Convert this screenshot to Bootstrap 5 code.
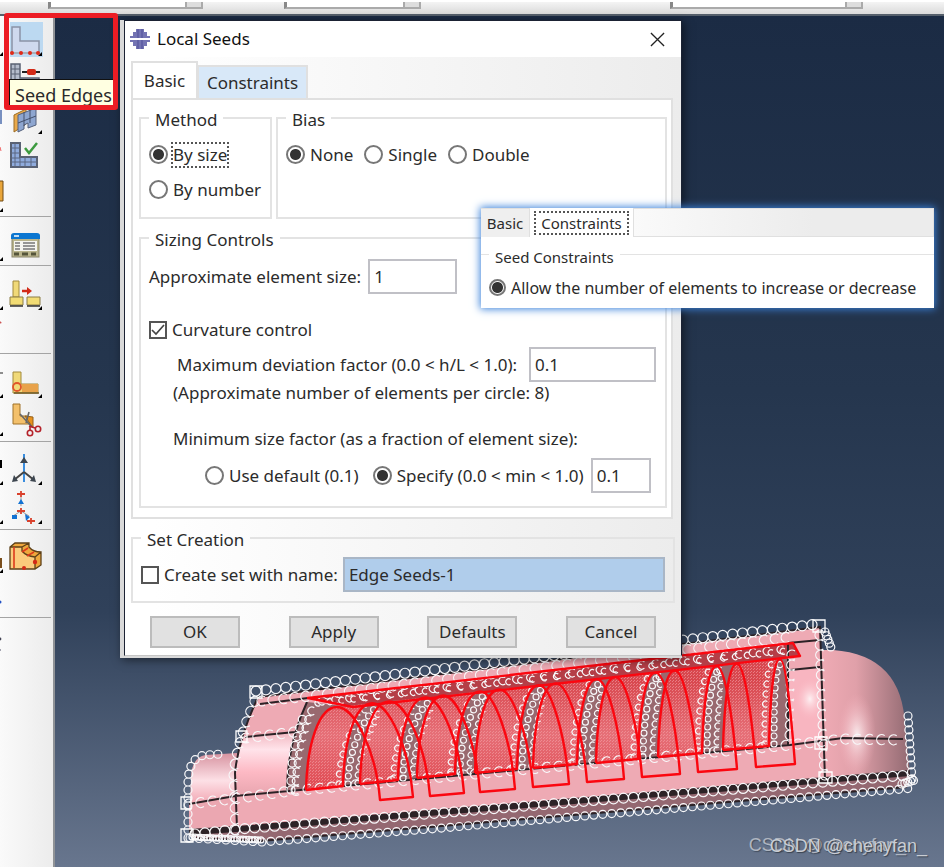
<!DOCTYPE html>
<html lang="en">
<head>
<meta charset="utf-8">
<meta name="viewport" content="width=device-width, initial-scale=1">
<title>Local Seeds</title>
<link href="https://cdn.jsdelivr.net/npm/bootstrap@5.3.0/dist/css/bootstrap.min.css" rel="stylesheet">
<style>
body{font-family:"Noto Sans","Open Sans",sans-serif;font-size:17px;line-height:22px;color:#2b2b2b;background:#1b2b44}
.topstrip{height:16px;border-top:2px solid #fff;border-bottom:2px solid #555f6b;background:linear-gradient(#f4f4f4,#dadada)}
.combo{height:7px;background:#fff;border:2px solid #aaa;border-top:0;border-left:3px solid #888;box-sizing:border-box}
.combo span{width:16px;background:#ddd;border-left:2px solid #aaa}
.combo-a{width:155px}
.combo-b{width:137px;margin-left:81px}
.combo-c{width:193px;margin-left:249px}
.tools{width:55px;background:linear-gradient(90deg,#fafafa,#ececec);border-right:2px solid #8f9296}
.tgroup{padding:5px 0 4px;border-bottom:1px solid #a4a4a4;margin-right:2px}
.tgroup:first-child{padding:3px 0 2px}
.tgroup:last-child{border:0}
.tool{display:block;width:100%;height:39px;padding:0;border:0;background:none;border-radius:0}
.tool svg{display:block;width:52px;height:39px}
.scene{background:linear-gradient(#1b2b44,#25364e 44%,#30415a 70%,#68768e);min-width:0}
.model{left:-55px;top:-16px;width:944px;height:867px}
.redbox{left:4px;top:-3px;width:114px;height:97px;border:5px solid #ec1c24;border-radius:3px;z-index:5}
.tip{left:9px;top:63px;width:108px;height:31px;padding:4px 5px;font-size:18px;background:#ffffe1;border:1px solid #111;z-index:4;white-space:nowrap}
.win{left:65px;top:4px;width:562px;background:#d9d9d9;padding:0 0 2px 4px;box-shadow:2px 2px 9px rgba(0,0,0,.5)}
.frame{border:1px solid #1b2233;border-bottom-color:#c5c5c5;background:#fff}
.titlebar{height:36px;padding:0 14px 0 5px;color:#111}
.titlebar .name{gap:7px}
.xbtn{border:0;background:none;padding:2px;line-height:0}
.wbody{background:linear-gradient(90deg,#fff 5%,#ececec);padding:5px 6px 7px 6px}
.tabrow{height:36px}
.tb{border:2px solid #e0e0e0;border-bottom:0;color:#2b2b2b;background:#efefef;padding:0;font-size:17px;line-height:22px}
.tb-basic{width:67px;height:37px;background:#fff;z-index:1}
.tb-cons{width:111px;height:33px;background:#d8e8f8;margin-left:-1px}
.pane{background:#fff;border:2px solid #e0e0e0;padding:4px 4px 5px 6px;margin-right:2px;height:421px}
.box{border:2px solid #e3e3e3;min-width:0;margin:0;padding:0 8px}
.box legend{float:none;width:auto;margin:0 0 6px;padding:5px 6px 0;font-size:17px;line-height:22px}
.method{width:133px;height:115px}
.bias{height:115px}
.bias .choices{gap:11px}
.sizing{height:284px;margin-top:5px}
.sizing legend{margin-bottom:8px}
.sizing .curv{margin-top:18px}
.sizing .fld{margin-left:2px}
.setbox{height:79px;margin-top:5px}
.optrow{gap:5px;height:35px}
.optrow label{white-space:nowrap}
.rd{appearance:none;width:19px;height:19px;margin:0;flex:none;border:2px solid #777;border-radius:50%;background:#fff}
.rd:checked{background:radial-gradient(circle,#333 5px,#fff 6px)}
.ck{appearance:none;width:18px;height:18px;margin:0;flex:none;border:2px solid #555;background:#fff}
.ck:checked{background:#fff url("data:image/svg+xml,%3Csvg xmlns='http://www.w3.org/2000/svg' viewBox='0 0 14 14'%3E%3Cpath d='M1 7l4 4 8-9' fill='none' stroke='%23444' stroke-width='1.7'/%3E%3C/svg%3E")}
.dots{outline:2px dotted #555}
.fld{height:35px;border:2px solid #c0c0c6;background:#fff;padding:0 4px;color:#2b2b2b;border-radius:0;min-width:0}
.w-a{width:89px}.w-b{width:127px}.w-c{width:60px}
.fld.sel{background:#b0cdeb;border-color:#a9b6c6}
.ind{padding-left:28px;gap:10px}
.factor{gap:14px}
.btnrow{padding:13px 19px 0}
.dlgbtn{width:90px;height:32px;border:2px solid #bcbcbc;background:#e1e1e1;padding:0;border-radius:0;font-size:17px;line-height:22px;color:#2b2b2b}
.inset{left:426px;top:192px;width:453px;background:#fff;box-shadow:0 0 8px 1px #3b82da;font-size:16px;z-index:3}
.insettabs{height:29px}
.insettabs .tb{font-size:15px;border-width:1px}
.insettabs .itb-a{width:49px;border-left:0}
.insettabs .itb-b{width:103px;background:#fff;border:0}
.itb-b span{outline:2px dotted #555;padding:0 5px}
.fill{background:linear-gradient(90deg,#fafafa,#ececec 60%);border:1px solid #e0e0e0}
.inset .box{border-width:1px 0 0;padding:0 8px 3px;margin-top:4px}
.inset .box legend{font-size:15px;margin-bottom:2px;padding-top:5px}
.inset .rd{width:17px;height:17px}
.wm{font:18px/24px "Liberation Sans",Arial,sans-serif;color:#c9cdd4;text-shadow:1px 1px 1px #39424f;white-space:nowrap}
.wm-a{right:38px;bottom:10px;opacity:.75}
.wm-b{right:17px;bottom:9px}
</style>
<script src="https://cdn.jsdelivr.net/npm/bootstrap@5.3.0/dist/js/bootstrap.bundle.min.js"></script>
</head>
<body>
<div class="vh-100 d-flex flex-column overflow-hidden">
<header class="topstrip d-flex">
  <div class="d-flex ms-5">
    <div class="combo combo-a d-flex justify-content-end"><span></span></div>
    <div class="combo combo-b d-flex justify-content-end"><span></span></div>
    <div class="combo combo-c d-flex justify-content-end"><span></span></div>
  </div>
</header>
<main class="d-flex flex-grow-1 position-relative">
  <nav class="tools flex-shrink-0" aria-label="Mesh tools">
    <div class="tgroup">
      <button class="tool" aria-label="Seed Edges"><svg viewBox="0 0 52 39"><rect x="10" y="3" width="33" height="35" fill="#bcd9f1"/><path d="M12 8h8v14h19v12H12z" fill="#cfd9ee" stroke="#8b93a6" stroke-width="1.5"/><path d="M12 34h27" stroke="#bbb"/><g fill="#e02a18"><circle cx="12" cy="34" r="2"/><circle cx="21" cy="34" r="2"/><circle cx="30" cy="34" r="2"/><circle cx="38" cy="34" r="2"/></g><path d="M42 33v4h-4zM3 33v4h-4z"/></svg></button>
      <button class="tool" aria-label="Seed part"><svg viewBox="0 0 52 39"><path d="M11 6h9v14h19v12H11z" fill="#b4bccc" stroke="#596173" stroke-width="1.5"/><path d="M15 6v20M11 11h9M11 16h9" stroke="#596173"/><path d="M22 14h18" stroke="#222" stroke-width="2"/><rect x="27" y="11" width="9" height="6" rx="2" fill="#d22a17"/></svg></button>
      <button class="tool" aria-label="Mesh controls"><svg viewBox="0 0 52 39"><path d="M14 18l12-6v15l-12 8z" fill="#e9a94a" stroke="#9c6b22"/><path d="M18 18l18-7v17l-8 3v-5l-4 2v4l-6 3z" fill="#8ea6d0" stroke="#55617c"/><path d="M24 15v14M30 13v13M18 26l18-7" stroke="#44506b" fill="none"/><path d="M42 33v4h-4z"/><path d="M0 13h2v14h-2z" fill="#7890c0"/></svg></button>
      <button class="tool" aria-label="Verify mesh"><svg viewBox="0 0 52 39"><path d="M11 7h9v14h17v10H11z" fill="#8fabdd" stroke="#596173" stroke-width="2"/><path d="M15 7v24M11 12h9M11 17h9M11 22h9M20 21v10M25 21v10M31 21v10M11 26h26" stroke="#5b6781"/><path d="M25 12l4 5 8-10" fill="none" stroke="#3c9a3f" stroke-width="2.5"/><path d="M0 11l1 4" stroke="#e66"/></svg></button>
      <button class="tool" aria-label="Edit mesh"><svg viewBox="0 0 52 39"><path d="M-2 6h5v20h-5z" fill="#e9a63b" stroke="#704b14"/><path d="M3 33v4h-4z"/></svg></button>
    </div>
    <div class="tgroup">
      <button class="tool" aria-label="Mesh table"><svg viewBox="0 0 52 39"><rect x="12" y="13" width="27" height="22" fill="#b9b48c" stroke="#8a866b"/><path d="M11 17v-3q0-3 3-3h23q3 0 3 3v3z" fill="#0b76d1"/><path d="M14 14h5" stroke="#fff" stroke-width="1.5"/><rect x="14" y="19" width="23" height="10" fill="#f5f5f0"/><path d="M15 21h5M15 24h5M15 27h5M23 21h12M23 24h12M23 27h12" stroke="#777" stroke-width="1.3"/><path d="M14 32h5M22 32h6M31 32h5" stroke="#55553a" stroke-width="3"/><path d="M3 35v4h-4z"/></svg></button>
    </div>
    <div class="tgroup">
      <button class="tool" aria-label="Move part"><svg viewBox="0 0 52 39"><path d="M13 10h6v16h-6z" fill="#f0d978" stroke="#a28a3c"/><path d="M10 26h13v8H10zM27 26h13v8H27z" fill="#f2dc74" stroke="#8a7c46"/><path d="M10 35h13M27 35h13" stroke="#333" stroke-width="1.5"/><path d="M22 20h6" stroke="#d22a17" stroke-width="2.5"/><path d="M27 16l5 4-5 4z" fill="#d22a17"/><path d="M42 35v4h-4zM3 35v4h-4z"/></svg></button>
      <button class="tool" aria-label="More"><svg viewBox="0 0 52 39"><path d="M0 13l1-1" stroke="#c55" stroke-width="2"/></svg></button>
    </div>
    <div class="tgroup">
      <button class="tool" aria-label="Join part"><svg viewBox="0 0 52 39"><path d="M13 13h8v12h17v9H13z" fill="#f0d978" stroke="#a28a3c"/><path d="M22 25h16v8H22z" fill="#e8a24a"/><path d="M14 34h25" stroke="#6b5522" stroke-width="1.5"/><circle cx="17" cy="28" r="4" fill="none" stroke="#e0552a" stroke-width="1.8"/><path d="M42 35v4h-4zM3 35v4h-4z"/><path d="M0 14h3" stroke="#222"/></svg></button>
      <button class="tool" aria-label="Cut part"><svg viewBox="0 0 52 39"><path d="M13 6h7v12h7l4 8H13z" fill="#f3c06b" stroke="#a0722a"/><path d="M25 18l8 1v11z" fill="#e8921e" stroke="#94601a"/><path d="M20 16l12 13M29 14l-3 11" stroke="#666" stroke-width="1.6"/><g fill="none" stroke="#b5232b" stroke-width="1.6"><circle cx="30" cy="35" r="2.7"/><circle cx="38" cy="31" r="2.7"/><path d="M30 32v-4M35 30l-6-2"/></g><path d="M3 34v4h-4z"/></svg></button>
    </div>
    <div class="tgroup">
      <button class="tool" aria-label="Axis"><svg viewBox="0 0 52 39"><path d="M24 7v28" stroke="#3a8dde" stroke-width="2"/><path d="M24 25l-10 8M24 25l10 8" stroke="#444" stroke-width="2"/><path d="M24 10l4 6h-8zM12 35l2-7 4 6zM36 35l-2-7-4 6z" fill="#3d4650"/><path d="M42 34v4h-4zM3 34v4h-4zM0 13h2v8h-2z"/></svg></button>
      <button class="tool" aria-label="Point axis"><svg viewBox="0 0 52 39"><path d="M21 11v9M21 25l-8 5M21 25l8 5" stroke="#999"/><path d="M17 8h8M21 5v6M17 25h8M21 22v6M27 35h8M31 32v6" stroke="#d9412c" stroke-width="1.8"/><path d="M21 13l3 5h-6zM12 29h5v4h-5zM25 28l5 3-4 4z" fill="#1272d3"/><path d="M42 34v4h-4zM3 34v4h-4z"/></svg></button>
    </div>
    <div class="tgroup">
      <button class="tool" aria-label="Edit feature"><svg viewBox="0 0 52 39"><path d="M10 12l5-4h14v4q4 5 12 5v13l-6 4H10z" fill="#eea73c"/><path d="M10 12h12v4q4 5 13 6v12H10z" fill="#fbcb7c"/><path d="M10 12l5-4h14v4q4 5 12 5v13l-6 4H10zM10 12h12v4q4 5 13 6v12M22 12l7-4M35 22l6-5" fill="none" stroke="#5d4018" stroke-width="1.3"/><path d="M14 12v21M22 17l6-4M27 21l7-4" stroke="#dc3a1c" stroke-width="1.6"/><circle cx="24" cy="33" r="2" fill="#d22a17"/><circle cx="35" cy="27" r="2.2" fill="#d22a17"/><path d="M0 23h2v10h-2z" fill="#7a4e1c"/><path d="M3 34v4h-4z"/></svg></button>
      <button class="tool" aria-label="Datum"><svg viewBox="0 0 52 39"><circle cx="0" cy="28" r="1.5" fill="#2452c4"/></svg></button>
    </div>
    <div class="tgroup">
      <button class="tool" aria-label="Query"><svg viewBox="0 0 52 39"><circle cx="0" cy="16" r="1.4" fill="#445"/><circle cx="0" cy="27" r="1" fill="#889"/></svg></button>
    </div>
  </nav>

  <section class="scene flex-grow-1 position-relative">
    <svg class="model position-absolute" viewBox="0 0 944 867" role="img" aria-label="Seeded part">
      <defs>
        <linearGradient id="gBody" x1="0" y1="700" x2="0" y2="790" gradientUnits="userSpaceOnUse"><stop offset="0" stop-color="#eba7b1"/><stop offset=".3" stop-color="#eeaab4"/><stop offset=".55" stop-color="#ffe3ea"/><stop offset=".8" stop-color="#fdb9c4"/><stop offset="1" stop-color="#edaab4"/></linearGradient>
        <linearGradient id="gCap" x1="0" y1="0" x2="0" y2="1"><stop offset="0" stop-color="#d793a0"/><stop offset=".35" stop-color="#fde0e6"/><stop offset=".6" stop-color="#f3afba"/></linearGradient>
        <linearGradient id="gDome" x1="0" y1="0" x2="1" y2="0"><stop offset="0" stop-color="#f0abb5"/><stop offset=".4" stop-color="#e0a0a9"/><stop offset="1" stop-color="#926a72"/></linearGradient>
        <radialGradient id="gShine"><stop offset="0" stop-color="#fff" stop-opacity=".8"/><stop offset="1" stop-color="#fcb4c0" stop-opacity="0"/></radialGradient>
        <linearGradient id="gRib" x1="0" y1="680" x2="0" y2="790" gradientUnits="userSpaceOnUse"><stop offset="0" stop-color="#d8484f"/><stop offset=".5" stop-color="#e67078"/><stop offset="1" stop-color="#df4a52"/></linearGradient>
        <pattern id="pDots" width="3" height="3" patternUnits="userSpaceOnUse"><path d="M0 0h1v1h-1zM1 2h1v1h-1z" fill="#f3a0a5" opacity=".6"/></pattern>
      </defs>
      <path d="M189 832L191 780Q191 757 206 755L236 754L237 830L910 773L907 787L430 827L260 841L192 838Z" fill="#946871"/>
      <path d="M189 832L191 780Q191 757 206 755L237 753V829Z" fill="url(#gCap)"/>
      <path d="M189 804L237 796V829L189 832Z" fill="#eba7b1"/>
      <path d="M820 650L833 650Q903 655 905 727L910 773L824 780Z" fill="url(#gDome)"/>
      <ellipse cx="857" cy="735" rx="19" ry="42" fill="url(#gShine)"/>
      <path d="M258 697L820 627L825 780L237 829L235 773Q238 740 258 697Z" fill="#eeaab4"/>
      <path d="M245 737L295 732Q287 760 287 791L235 796Q232 765 245 737Z" fill="url(#gBody)"/>
      <path d="M790 670L820 667L822 742L790 745Z" fill="#f8b5c0"/>
      <ellipse cx="810" cy="699" rx="16" ry="22" fill="url(#gShine)"/>
      <path d="M307 702L353 707L788 658L789 745L287 791Q287 745 307 702Z" fill="#99696f"/>
      <path d="M308 698L793 643L800 656L353 707Z" fill="#b53e47"/>
      <g fill="none" stroke="#2c2226" stroke-width="2">
        <path d="M258 697L820 627L825 780M260 704L308 698M245 737L295 732M235 796L790 745L843 738L903 739M189 804L235 796M258 697Q238 740 235 773L237 829M307 702Q287 745 287 791M788 643L788 745M788 643L820 640M790 670L820 667"/>
        <path d="M189 832L237 829L910 773" stroke-width="6"/>
        <path d="M192 838L260 841L430 827L907 787"/>
      </g>
      <g id="ribs"></g>
      <g id="seeds" fill="none" stroke="#f8f8fa" stroke-width="1.2"></g>
      <g id="wires" fill="none" stroke="#fb0710" stroke-width="2.4" stroke-linejoin="round"><path d="M308 698L793 643L800 656L353 707Z"/></g>
      <g fill="none" stroke="#fff" stroke-width="1.3"><path d="M250 686h12v12h-12zM813 620h12v12h-12zM181 797h10v12h-10zM181 829h12v13h-12zM236 731h11v11h-11zM815 737h12v12h-12zM819 772h13v11h-13z"/></g>
    </svg>

    <div class="win position-absolute">
      <div class="frame">
        <div class="titlebar d-flex align-items-center justify-content-between">
          <div class="name d-flex align-items-center">
            <svg width="20" height="20" viewBox="0 0 20 20"><path d="M6 0h8v3h3v4h3v6h-3v4h-3v3H6v-3H3v-4H0V7h3V3h3z" fill="#7474b3"/><path d="M7 0h2v20H7zM11 0h2v20h-2z" fill="#6161a6"/><path d="M0 10h20" stroke="#fff" stroke-width="2"/></svg>
            <span>Local Seeds</span>
          </div>
          <button class="xbtn" aria-label="Close"><svg width="15" height="15" viewBox="0 0 16 16"><path d="M1 1l14 14M15 1L1 15" stroke="#222" stroke-width="1.4"/></svg></button>
        </div>
        <div class="wbody">
          <div class="tabrow d-flex align-items-end" role="tablist">
            <button class="tb tb-basic" role="tab" aria-selected="true">Basic</button>
            <button class="tb tb-cons" role="tab" aria-selected="false">Constraints</button>
          </div>
          <div class="pane">
            <div class="d-flex gap-1">
              <fieldset class="box method"><legend>Method</legend>
                <div class="optrow d-flex align-items-center"><input class="rd" type="radio" name="method" id="bysize" checked><label class="dots" for="bysize">By size</label></div>
                <div class="optrow d-flex align-items-center"><input class="rd" type="radio" name="method" id="bynum"><label for="bynum">By number</label></div>
              </fieldset>
              <fieldset class="box bias flex-grow-1"><legend>Bias</legend>
                <div class="choices d-flex">
                  <div class="optrow d-flex align-items-center"><input class="rd" type="radio" name="bias" id="bn" checked><label for="bn">None</label></div>
                  <div class="optrow d-flex align-items-center"><input class="rd" type="radio" name="bias" id="bs"><label for="bs">Single</label></div>
                  <div class="optrow d-flex align-items-center"><input class="rd" type="radio" name="bias" id="bd"><label for="bd">Double</label></div>
                </div>
              </fieldset>
            </div>
            <fieldset class="box sizing"><legend>Sizing Controls</legend>
              <div class="optrow d-flex align-items-center"><label for="aes">Approximate element size:</label><input class="fld w-a" id="aes" type="text" value="1"></div>
              <div class="optrow curv d-flex align-items-center"><input class="ck" type="checkbox" id="curv" checked><label for="curv">Curvature control</label></div>
              <div class="optrow d-flex align-items-center ind"><label for="mdf">Maximum deviation factor (0.0 &lt; h/L &lt; 1.0):</label><input class="fld w-b" id="mdf" type="text" value="0.1"></div>
              <div class="ps-4">(Approximate number of elements per circle: 8)</div>
              <div class="ps-4 mt-4 pb-2">Minimum size factor (as a fraction of element size):</div>
              <div class="factor d-flex ps-5">
                <div class="optrow d-flex align-items-center ps-2"><input class="rd" type="radio" name="msf" id="ud"><label for="ud">Use default (0.1)</label></div>
                <div class="optrow d-flex align-items-center"><input class="rd" type="radio" name="msf" id="sp" checked><label for="sp">Specify (0.0 &lt; min &lt; 1.0)</label><input class="fld w-c" type="text" value="0.1" aria-label="Minimum size factor"></div>
              </div>
            </fieldset>
          </div>
          <fieldset class="box setbox"><legend>Set Creation</legend>
            <div class="optrow d-flex align-items-center"><input class="ck" type="checkbox" id="cs"><label for="cs">Create set with name:</label><input class="fld sel flex-grow-1" type="text" value="Edge Seeds-1" aria-label="Set name"></div>
          </fieldset>
          <div class="btnrow d-flex justify-content-between">
            <button class="dlgbtn">OK</button><button class="dlgbtn">Apply</button><button class="dlgbtn">Defaults</button><button class="dlgbtn">Cancel</button>
          </div>
        </div>
      </div>
    </div>

    <div class="inset position-absolute">
      <div class="insettabs d-flex">
        <button class="tb itb-a">Basic</button><button class="tb itb-b"><span>Constraints</span></button><div class="fill flex-grow-1"></div>
      </div>
      <fieldset class="box"><legend>Seed Constraints</legend>
        <div class="optrow d-flex align-items-center"><input class="rd" type="radio" id="allow" checked><label for="allow">Allow the number of elements to increase or decrease</label></div>
      </fieldset>
    </div>
    <div class="wm wm-a position-absolute">CSDN @chenyfan_</div>
    <div class="wm wm-b position-absolute">CSDN @chenyfan_</div>
  </section>
  <div class="tip position-absolute">Seed Edges</div>
  <div class="redbox position-absolute"></div>
</main>
</div>
<script>
(() => {
const NS = 'http://www.w3.org/2000/svg';
function add(id, d, attrs) {
  const p = document.createElementNS(NS, 'path');
  p.setAttribute('d', d);
  for (const k in attrs || {}) p.setAttribute(k, attrs[k]);
  document.getElementById(id).appendChild(p);
}
// Each rib: back left x, back right x, back y, front left x, front right x, front y
const list = [[306,343,790,380,413,800],[360,398,784,430,464,796],[417,455,778,480,515,792],[475,517,773,533,569,787],[533,577,768,587,624,782],[596,638,763,642,680,777],[658,702,757,698,737,772],[723,769,750,756,795,767]];
const crest = x => 707 - (x - 337) * 0.108;
function half(x0, y0, px) { const t = crest(px), w = (px - x0) * .6; return `M${x0} ${y0}C${x0 + 1} ${y0 - 45} ${px - w} ${t} ${px} ${t}`; }
for (const [a, b, y, c, d, fy] of list) {
  const pa = a + (c - a) * 0.42, pb = b + (d - b) * 0.42, ta = crest(pa), tb = crest(pb);
  const wb = (pb - b) * .6;
  const shape = `${half(a, y, pa)}L${pb} ${tb}C${pb - wb} ${tb} ${b + 1} ${y - 49} ${b} ${y - 4}Z`;
  add('ribs', shape, {fill: 'url(#gRib)'});
  add('ribs', shape, {fill: 'url(#pDots)'});
  add('wires', `${half(a, y, pa)}C${pa + (c - pa) * .4} ${ta} ${c - 4} ${fy - 50} ${c} ${fy}L${d} ${fy - 3}C${d - 4} ${fy - 53} ${pb + (d - pb) * .4} ${tb} ${pb} ${tb}M${a} ${y}L${b} ${y - 4}C${b + 1} ${y - 49} ${pb - wb} ${tb} ${pb} ${tb}`);
}
// A row of seed rings following a curve; open rings leave a gap on one side
function chain(d, step, r, open) {
  const path = document.createElementNS(NS, 'path');
  path.setAttribute('d', d);
  const n = Math.floor(path.getTotalLength() / step);
  let out = '';
  for (let i = 0; i <= n; i++) {
    const p = path.getPointAtLength(i * step);
    out += open ? `M${p.x + r * .6} ${p.y - r * .8}A${r} ${r} 0 1 0 ${p.x + r * .6} ${p.y + r * .8}`
                : `M${p.x - r} ${p.y}a${r} ${r} 0 1 0 ${2 * r} 0a${r} ${r} 0 1 0 ${-2 * r} 0`;
  }
  add('seeds', out);
}
chain('M256 691L818 624', 10, 5);
chain('M262 701L310 696L790 637', 11, 5, true);
chain('M318 703L795 650', 12, 3, true);
chain('M322 701L795 648', 14, 4, true);
chain('M189 804L240 798L290 791L790 745L843 739L905 740', 12, 5, true);
chain('M195 834L240 829L910 775', 10, 5);
chain('M190 838L262 842L430 829L914 788', 9, 4);
chain('M192 837L262 840', 3, 3);
chain('M188 838V782Q189 756 206 755L222 754', 8, 4);
chain('M236 830L234 773Q238 740 256 699', 11, 5, true);
chain('M246 738L295 732', 12, 5, true);
chain('M291 790Q290 750 305 712', 9, 4);
chain('M296 790Q297 750 313 708', 9, 4, true);
chain('M820 635L825 778', 10, 5, true);
chain('M792 655L790 740', 10, 5, true);
chain('M825 632L832 650', 4, 4);
chain('M908 716L912 780', 7, 4);
chain('M902 784L915 780', 3, 4);
for (const [, b, y, , d] of list) {
  const pb = b + (d - b) * 0.5;
  chain(`M${b + 5} ${y - 6}C${b + 5} ${y - 45} ${pb - 8} ${crest(pb) + 6} ${pb} ${crest(pb) + 4}`, 8, 3);
  if (b < 760) chain(`M${b + 15} ${y - 7}C${b + 15} ${y - 45} ${pb + 5} ${crest(pb) + 12} ${pb} ${crest(pb) + 4}`, 8, 3, true);
  chain(`M${b - 4} ${y - 6}C${b - 4} ${y - 45} ${pb - 16} ${crest(pb) + 4} ${pb - 8} ${crest(pb) + 4}`, 10, 3, true);
}
})();
</script>
</body>
</html>
